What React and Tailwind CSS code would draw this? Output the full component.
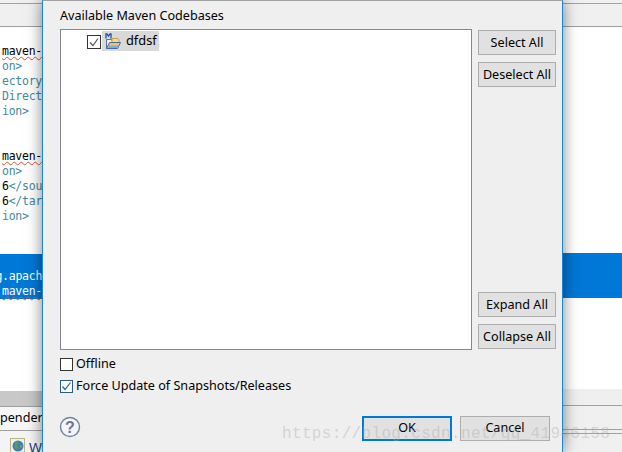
import React from 'react'

const SANS = { fontFamily: '"Noto Sans", sans-serif' }
const TEAL = 'text-[#3f8a9c]'
const SQUIGGLE = 'underline decoration-wavy decoration-[#e05030] decoration-1'

function CodeLine({ children, className = '' }) {
  return <div className={`h-[15px] leading-[15px] whitespace-nowrap ${className}`}>{children}</div>
}

function Btn({ children, className = '' }) {
  return (
    <button className={`w-[78px] h-[25px] shrink-0 pt-[2px] bg-[#e1e1e1] border border-[#adadad] text-[12.6px] leading-none text-black ${className}`}>
      {children}
    </button>
  )
}

function MavenFolder() {
  return (
    <svg width="16" height="17" viewBox="0 0 16 17" className="shrink-0">
      <path d="M1.5 6.5h5l1 2h6v2H4.5l-3 5z" fill="#fbeeb8" stroke="#4a78b8" />
      <path d="M7 5.5h6l1 1.5v3H7z" fill="#f7d98a" stroke="#c98f2e" strokeWidth="0.8" />
      <path d="M1.5 15.5l3.2-6h10.8l-3 6z" fill="#f4c458" stroke="#3f6ab0" />
      <path d="M3 15l1.6-2.6h9.2L12.4 15z" fill="#7fa9e2" />
      <path d="M1 5.5V1h1l1.5 2.2L5 1h1v4.5" fill="none" stroke="#1f4fa8" strokeWidth="1.3" />
    </svg>
  )
}

function HelpIcon() {
  return (
    <svg width="22" height="22" viewBox="0 0 22 22">
      <circle cx="11" cy="11" r="9.5" fill="#f4f5f8" stroke="#6f83a5" strokeWidth="1.4" />
      <text x="11" y="16.5" textAnchor="middle" fontSize="16" fontWeight="700" fill="#6b7690" fontFamily="Liberation Sans, sans-serif">?</text>
    </svg>
  )
}

function Globe() {
  return (
    <span className="w-[15px] h-[15px] shrink-0 bg-[#f4f2e4] border border-[#b8b48c] flex items-center justify-center">
      <svg width="12" height="12" viewBox="0 0 12 12">
        <circle cx="6" cy="6" r="5.5" fill="#3f7fb8" />
        <path d="M3 2.5l3-1 1 2-2 1.5 1 2.5-2 2.5-1.5-4z" fill="#5f9a58" />
        <path d="M8 5l2.5.5-1 3-1.5-1z" fill="#8a9a50" />
      </svg>
    </span>
  )
}

export default function App() {
  return (
    <div className="relative flex w-[622px] h-[452px] overflow-hidden bg-white" style={SANS}>
      {/* editor behind the dialog, left part */}
      <div className="w-[42px] shrink-0 flex flex-col overflow-hidden text-[11.5px] tracking-[-0.25px]" style={{ fontFamily: '"DejaVu Sans Mono", monospace' }}>
        <div className="h-[27px] shrink-0 bg-[#f0f0f0] border-b border-[#a0a0a0]">
          <div className="h-[4px] border-b border-[#a0a0a0]" />
        </div>
        <div className="h-[17px] shrink-0" />
        <div className="pl-[2px]">
          <CodeLine className={`text-black ${SQUIGGLE}`}>maven-</CodeLine>
          <CodeLine className={TEAL}>on&gt;</CodeLine>
          <CodeLine className={TEAL}>ectory</CodeLine>
          <CodeLine className={TEAL}>Direct</CodeLine>
          <CodeLine className={TEAL}>ion&gt;</CodeLine>
        </div>
        <div className="h-[30px] shrink-0" />
        <div className="pl-[2px]">
          <CodeLine className={`text-black ${SQUIGGLE}`}>maven-</CodeLine>
          <CodeLine className={TEAL}>on&gt;</CodeLine>
          <CodeLine className={TEAL}><span className="text-black">6</span>&lt;/sou</CodeLine>
          <CodeLine className={TEAL}><span className="text-black">6</span>&lt;/tar</CodeLine>
          <CodeLine className={TEAL}>ion&gt;</CodeLine>
        </div>
        <div className="h-[30px] shrink-0" />
        <div className="h-[45px] shrink-0 bg-[#0078d7] pt-[15px] pl-[2px]">
          <CodeLine className="text-white -ml-[6.6px]">g.apach</CodeLine>
          <CodeLine className={`text-white ${SQUIGGLE}`}>maven-</CodeLine>
        </div>
        <div className="h-[92px] shrink-0" />
        <div className="h-[16px] shrink-0 bg-[#c8c8c8] border-b border-[#a0a0a0]" />
        <div className="h-[24px] shrink-0 bg-[#f6f6f6] border-b border-[#a0a0a0] text-[12.6px] tracking-normal leading-[21px] text-black whitespace-nowrap" style={SANS}>pender</div>
        <div className="flex-1 bg-[#f4f4f4] flex items-start gap-[4px] pl-[10px] pt-[7px]">
          <Globe />
          <span className="text-[14px] tracking-normal leading-[20px] text-[#1c3f78]" style={SANS}>W</span>
        </div>
      </div>

      {/* dialog */}
      <div className="w-[521px] shrink-0 h-full flex flex-col bg-[#efefef] border-x border-t border-x-[#1b85d8] border-t-[#a0a0a0] pl-[17px] pr-[6px] shadow-[0_0_14px_rgba(0,0,0,0.5)] z-10">
        <div className="h-[28px] shrink-0 text-[12.6px] leading-[30px] text-black">Available Maven Codebases</div>
        <div className="flex gap-[6px] h-[321px] shrink-0">
          <div className="w-[412px] bg-white border border-[#828790] pl-[26px] pt-[1px]">
            <div className="flex items-center h-[20px]">
              <span className="w-[14px] h-[14px] border border-[#333] bg-white flex items-center justify-center mr-[1px] mt-[1px]">
                <svg width="12" height="12" viewBox="0 0 12 12"><path d="M2 6.5l3 3 5-7" fill="none" stroke="#555" strokeWidth="1.2" /></svg>
              </span>
              <div className="flex items-center gap-[5px] bg-[#d9d9d9] h-[20px] w-[57px] pl-[3px]">
                <MavenFolder />
                <span className="text-[12.8px] text-black">dfdsf</span>
              </div>
            </div>
          </div>
          <div className="flex flex-col pt-[1px] pb-[1px] gap-[7px]">
            <Btn>Select All</Btn>
            <Btn>Deselect All</Btn>
            <Btn className="mt-auto">Expand All</Btn>
            <Btn>Collapse All</Btn>
          </div>
        </div>
        <div className="flex items-center h-[14px] mt-[7px] gap-[3px]">
          <span className="w-[13px] h-[13px] bg-white border border-[#333] shrink-0" />
          <span className="text-[12.6px] text-black">Offline</span>
        </div>
        <div className="flex items-center h-[14px] mt-[8px] gap-[3px]">
          <span className="w-[13px] h-[13px] bg-white border border-[#2a5a88] shrink-0 flex items-center justify-center">
            <svg width="11" height="11" viewBox="0 0 11 11"><path d="M1.5 5.5l2.5 3 5.5-7" fill="none" stroke="#2a5a98" strokeWidth="1.2" /></svg>
          </span>
          <span className="text-[12.6px] text-black">Force Update of Snapshots/Releases</span>
        </div>
        <div className="flex items-start mt-[23px]">
          <div className="w-[302px] -ml-[1px] mr-[1px]"><HelpIcon /></div>
          <button className="w-[90px] h-[25px] bg-[#e1e1e1] border-2 border-[#0078d7] text-[12.6px] text-black">OK</button>
          <button className="w-[90px] h-[25px] ml-[8px] bg-[#e1e1e1] border border-[#adadad] text-[12.6px] text-black">Cancel</button>
        </div>
      </div>

      {/* editor behind the dialog, right part */}
      <div className="flex-1 flex flex-col bg-white">
        <div className="h-[27px] shrink-0 bg-[#f0f0f0] border-b border-[#a0a0a0]">
          <div className="h-[4px] border-b border-[#a0a0a0]" />
        </div>
        <div className="h-[226px] shrink-0" />
        <div className="h-[45px] shrink-0 bg-[#0078d7]" />
        <div className="h-[91px] shrink-0" />
        <div className="h-[17px] shrink-0 bg-[#efefef] border-b border-[#a0a0a0]" />
        <div className="h-[24px] shrink-0 bg-[#f0f0f0] border-b border-[#a0a0a0]" />
        <div className="h-[4px] shrink-0 bg-[#f0f0f0] border-b border-[#a0a0a0]" />
        <div className="flex-1 bg-[#f0f0f0]" />
      </div>

      {/* csdn watermark */}
      <div className="absolute left-[282px] top-[423px] z-20 text-[16px] leading-[22px] text-[#a8a8a8]/40 whitespace-nowrap tracking-[0.34px]" style={{ fontFamily: '"Liberation Mono", monospace' }}>
        https://blog.csdn.net/qq_41946158
      </div>
    </div>
  )
}
